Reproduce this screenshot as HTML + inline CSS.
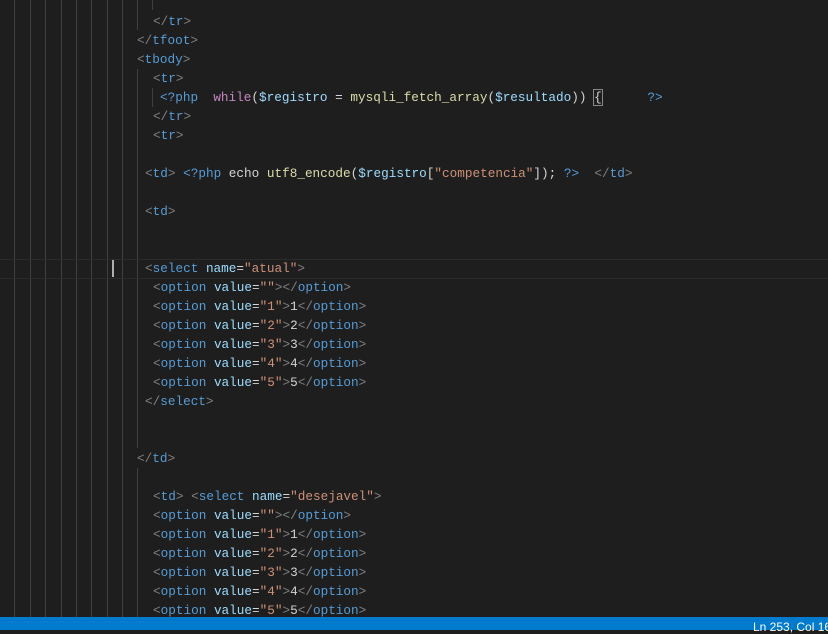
<!DOCTYPE html>
<html><head><meta charset="utf-8"><style>
html,body{margin:0;padding:0;}
body{width:828px;height:630px;background:#1e1e1e;position:relative;overflow:hidden;font-family:"Liberation Mono",monospace;font-size:12.7px;}
.l{position:absolute;white-space:pre;line-height:19px;height:19px;color:#d4d4d4;}
.g{position:absolute;width:1px;background:#404040;}
.p{color:#808080}.t{color:#569cd6}.a{color:#9cdcfe}.s{color:#ce9178}.k{color:#c586c0}.f{color:#dcdcaa}.w{color:#d4d4d4}
.sb{position:absolute;left:0;top:617px;width:828px;height:13px;background:#007acc;color:#fff;font-family:"Liberation Sans",sans-serif;font-size:12px;}
</style></head><body>
<div class="g" style="left:14px;top:0;height:617px"></div>
<div class="g" style="left:30px;top:0;height:617px"></div>
<div class="g" style="left:45px;top:0;height:617px"></div>
<div class="g" style="left:61px;top:0;height:617px"></div>
<div class="g" style="left:76px;top:0;height:617px"></div>
<div class="g" style="left:91px;top:0;height:617px"></div>
<div class="g" style="left:107px;top:0;height:617px"></div>
<div class="g" style="left:122px;top:0;height:617px"></div>
<div class="g" style="left:137px;top:0;height:30px"></div>
<div class="g" style="left:137px;top:69px;height:379px"></div>
<div class="g" style="left:137px;top:468px;height:149px"></div>
<div class="g" style="left:152px;top:0;height:10px"></div>
<div class="g" style="left:152px;top:88px;height:19px"></div>
<div style="position:absolute;left:0;top:259px;width:828px;height:18px;border-top:1px solid #2c2c2c;border-bottom:1px solid #2c2c2c"></div>
<div style="position:absolute;left:112px;top:260px;width:2px;height:17px;background:#aeafad"></div>

<div class="l" style="left:153px;top:12px"><span class="p">&lt;/</span><span class="t">tr</span><span class="p">&gt;</span></div>
<div class="l" style="left:137px;top:31px"><span class="p">&lt;/</span><span class="t">tfoot</span><span class="p">&gt;</span></div>
<div class="l" style="left:137px;top:50px"><span class="p">&lt;</span><span class="t">tbody</span><span class="p">&gt;</span></div>
<div class="l" style="left:153px;top:69px"><span class="p">&lt;</span><span class="t">tr</span><span class="p">&gt;</span></div>
<div class="l" style="left:160px;top:88px"><span class="t">&lt;?php</span>  <span class="k">while</span><span class="w">(</span><span class="a">$registro</span> = <span class="f">mysqli_fetch_array</span>(<span class="a">$resultado</span>)) <span style="outline:1px solid #888">{</span>      <span class="t">?&gt;</span></div>
<div class="l" style="left:153px;top:107px"><span class="p">&lt;/</span><span class="t">tr</span><span class="p">&gt;</span></div>
<div class="l" style="left:153px;top:126px"><span class="p">&lt;</span><span class="t">tr</span><span class="p">&gt;</span></div>
<div class="l" style="left:145px;top:164px"><span class="p">&lt;</span><span class="t">td</span><span class="p">&gt;</span> <span class="t">&lt;?php</span> echo <span class="f">utf8_encode</span>(<span class="a">$registro</span>[<span class="s">"competencia"</span>]); <span class="t">?&gt;</span>  <span class="p">&lt;/</span><span class="t">td</span><span class="p">&gt;</span></div>
<div class="l" style="left:145px;top:202px"><span class="p">&lt;</span><span class="t">td</span><span class="p">&gt;</span></div>
<div class="l" style="left:145px;top:259px"><span class="p">&lt;</span><span class="t">select</span> <span class="a">name</span>=<span class="s">"atual"</span><span class="p">&gt;</span></div>
<div class="l" style="left:153px;top:278px"><span class="p">&lt;</span><span class="t">option</span> <span class="a">value</span>=<span class="s">""</span><span class="p">&gt;&lt;/</span><span class="t">option</span><span class="p">&gt;</span></div>
<div class="l" style="left:153px;top:297px"><span class="p">&lt;</span><span class="t">option</span> <span class="a">value</span>=<span class="s">"1"</span><span class="p">&gt;</span>1<span class="p">&lt;/</span><span class="t">option</span><span class="p">&gt;</span></div>
<div class="l" style="left:153px;top:316px"><span class="p">&lt;</span><span class="t">option</span> <span class="a">value</span>=<span class="s">"2"</span><span class="p">&gt;</span>2<span class="p">&lt;/</span><span class="t">option</span><span class="p">&gt;</span></div>
<div class="l" style="left:153px;top:335px"><span class="p">&lt;</span><span class="t">option</span> <span class="a">value</span>=<span class="s">"3"</span><span class="p">&gt;</span>3<span class="p">&lt;/</span><span class="t">option</span><span class="p">&gt;</span></div>
<div class="l" style="left:153px;top:354px"><span class="p">&lt;</span><span class="t">option</span> <span class="a">value</span>=<span class="s">"4"</span><span class="p">&gt;</span>4<span class="p">&lt;/</span><span class="t">option</span><span class="p">&gt;</span></div>
<div class="l" style="left:153px;top:373px"><span class="p">&lt;</span><span class="t">option</span> <span class="a">value</span>=<span class="s">"5"</span><span class="p">&gt;</span>5<span class="p">&lt;/</span><span class="t">option</span><span class="p">&gt;</span></div>
<div class="l" style="left:145px;top:392px"><span class="p">&lt;/</span><span class="t">select</span><span class="p">&gt;</span></div>
<div class="l" style="left:137px;top:449px"><span class="p">&lt;/</span><span class="t">td</span><span class="p">&gt;</span></div>
<div class="l" style="left:153px;top:487px"><span class="p">&lt;</span><span class="t">td</span><span class="p">&gt;</span> <span class="p">&lt;</span><span class="t">select</span> <span class="a">name</span>=<span class="s">"desejavel"</span><span class="p">&gt;</span></div>
<div class="l" style="left:153px;top:506px"><span class="p">&lt;</span><span class="t">option</span> <span class="a">value</span>=<span class="s">""</span><span class="p">&gt;&lt;/</span><span class="t">option</span><span class="p">&gt;</span></div>
<div class="l" style="left:153px;top:525px"><span class="p">&lt;</span><span class="t">option</span> <span class="a">value</span>=<span class="s">"1"</span><span class="p">&gt;</span>1<span class="p">&lt;/</span><span class="t">option</span><span class="p">&gt;</span></div>
<div class="l" style="left:153px;top:544px"><span class="p">&lt;</span><span class="t">option</span> <span class="a">value</span>=<span class="s">"2"</span><span class="p">&gt;</span>2<span class="p">&lt;/</span><span class="t">option</span><span class="p">&gt;</span></div>
<div class="l" style="left:153px;top:563px"><span class="p">&lt;</span><span class="t">option</span> <span class="a">value</span>=<span class="s">"3"</span><span class="p">&gt;</span>3<span class="p">&lt;/</span><span class="t">option</span><span class="p">&gt;</span></div>
<div class="l" style="left:153px;top:582px"><span class="p">&lt;</span><span class="t">option</span> <span class="a">value</span>=<span class="s">"4"</span><span class="p">&gt;</span>4<span class="p">&lt;/</span><span class="t">option</span><span class="p">&gt;</span></div>
<div class="l" style="left:153px;top:601px"><span class="p">&lt;</span><span class="t">option</span> <span class="a">value</span>=<span class="s">"5"</span><span class="p">&gt;</span>5<span class="p">&lt;/</span><span class="t">option</span><span class="p">&gt;</span></div>
<div class="sb"><span style="position:absolute;left:753px;top:3px;white-space:nowrap">Ln 253, Col 16</span></div>
</body></html>
